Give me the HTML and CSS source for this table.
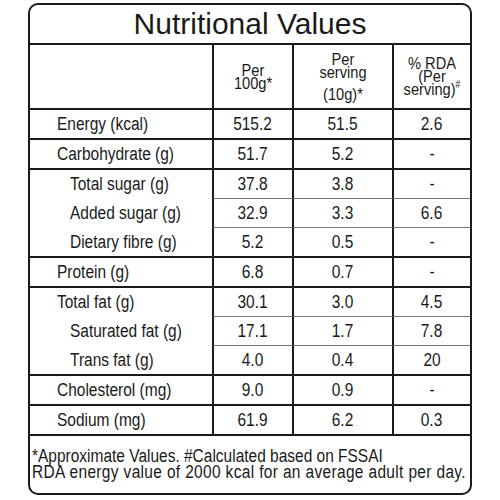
FILE: index.html
```html
<!DOCTYPE html>
<html lang="en">
<head>
    <meta charset="UTF-8">
    <meta name="viewport" content="width=device-width, initial-scale=1.0">
    <title>Nutritional Values</title>
    <link rel="stylesheet" href="styles.css">
</head>
<body>
    <div class="etiqueta">
        <div class="titulo">Nutritional Values</div>
        <table class="tabla">
            <colgroup>
                <col class="c-nombre">
                <col class="c-100">
                <col class="c-porcion">
                <col class="c-rda">
            </colgroup>
            <tr class="cabecera">
                <td class="nombre"></td>
                <td><span class="linea">Per</span><span class="linea">100g*</span></td>
                <td><span class="linea">Per</span><span class="linea">serving</span><span class="linea aparte">(10g)*</span></td>
                <td><span class="linea">% RDA</span><span class="linea">(Per</span><span class="linea">serving)<sup>#</sup></span></td>
            </tr>
            <tr>
                <td class="nombre"><span class="t">Energy (kcal)</span></td>
                <td><span class="t">515.2</span></td><td><span class="t">51.5</span></td><td><span class="t">2.6</span></td>
            </tr>
            <tr>
                <td class="nombre"><span class="t">Carbohydrate (g)</span></td>
                <td><span class="t">51.7</span></td><td><span class="t">5.2</span></td><td><span class="t">-</span></td>
            </tr>
            <tr>
                <td class="nombre sub"><span class="t">Total sugar (g)</span></td>
                <td><span class="t">37.8</span></td><td><span class="t">3.8</span></td><td><span class="t">-</span></td>
            </tr>
            <tr class="fina">
                <td class="nombre sub"><span class="t">Added sugar (g)</span></td>
                <td><span class="t">32.9</span></td><td><span class="t">3.3</span></td><td><span class="t">6.6</span></td>
            </tr>
            <tr class="fina">
                <td class="nombre sub"><span class="t">Dietary fibre (g)</span></td>
                <td><span class="t">5.2</span></td><td><span class="t">0.5</span></td><td><span class="t">-</span></td>
            </tr>
            <tr>
                <td class="nombre"><span class="t">Protein (g)</span></td>
                <td><span class="t">6.8</span></td><td><span class="t">0.7</span></td><td><span class="t">-</span></td>
            </tr>
            <tr>
                <td class="nombre"><span class="t">Total fat (g)</span></td>
                <td><span class="t">30.1</span></td><td><span class="t">3.0</span></td><td><span class="t">4.5</span></td>
            </tr>
            <tr class="fina">
                <td class="nombre sub"><span class="t">Saturated fat (g)</span></td>
                <td><span class="t">17.1</span></td><td><span class="t">1.7</span></td><td><span class="t">7.8</span></td>
            </tr>
            <tr class="fina">
                <td class="nombre sub"><span class="t">Trans fat (g)</span></td>
                <td><span class="t">4.0</span></td><td><span class="t">0.4</span></td><td><span class="t">20</span></td>
            </tr>
            <tr>
                <td class="nombre"><span class="t">Cholesterol (mg)</span></td>
                <td><span class="t">9.0</span></td><td><span class="t">0.9</span></td><td><span class="t">-</span></td>
            </tr>
            <tr>
                <td class="nombre"><span class="t">Sodium (mg)</span></td>
                <td><span class="t">61.9</span></td><td><span class="t">6.2</span></td><td><span class="t">0.3</span></td>
            </tr>
        </table>
        <div class="nota">
            <span class="t">*Approximate Values. #Calculated based on FSSAI</span>
            <span class="t ancha">RDA energy value of 2000 kcal for an average adult per day.</span>
        </div>
    </div>
</body>
</html>
```

FILE: styles.css
```css
body {
    margin: 0;
    padding: 3px 28px 0 28px;
    background-color: #fff;
    color: #1a1a1a;
    font-family: "Liberation Sans", Arial, sans-serif;
}
.etiqueta {
    width: 440px;
    height: 488px;
    border: 2px solid #1a1a1a;
    border-radius: 10px;
    overflow: hidden;
    display: flex;
    flex-direction: column;
}
.titulo {
    font-size: 30px;
    text-align: center;
    height: 38px;
    line-height: 38px;
    border-bottom: 2px solid #1a1a1a;
}
/* Liberation Sans estrechada para imitar la letra condensada */
.t {
    display: inline-block;
    white-space: nowrap;
    transform: scaleX(0.86);
    transform-origin: center center;
}
.tabla {
    width: 440px;
    table-layout: fixed;
    border-collapse: separate;
    border-spacing: 0;
    font-size: 18px;
}
.c-nombre { width: 182px; }
.c-100 { width: 80px; }
.c-porcion { width: 100px; }
.c-rda { width: 78px; }
.tabla td {
    height: 28px;
    padding: 0;
    text-align: center;
    vertical-align: middle;
    border-top: 2px solid #1a1a1a;
    border-left: 2px solid #1a1a1a;
}
.tabla tr:first-child td {
    border-top: none;
}
.tabla td.nombre {
    text-align: left;
    padding-left: 27px;
    border-left: none;
}
.tabla td.sub {
    padding-left: 40px;
}
.tabla td.nombre .t {
    transform-origin: left center;
}
.tabla tr.fina td {
    border-top: 1px solid #777;
}
.tabla tr.fina td.nombre {
    border-top: 1px solid transparent;
}
.cabecera td {
    height: 63px;
    font-size: 17px;
    line-height: 13px;
}
.linea {
    display: block;
    white-space: nowrap;
    transform: scaleX(0.86);
}
.linea.aparte {
    margin-top: 9px;
}
.cabecera sup {
    font-size: 10px;
    line-height: 0;
}
.nota {
    flex: 1;
    border-top: 2px solid #1a1a1a;
    font-size: 18px;
    line-height: 16px;
    padding: 12px 0 0 2px;
}
.nota .t {
    display: block;
    transform-origin: left center;
}
.nota .ancha {
    letter-spacing: 0.4px;
}
```
